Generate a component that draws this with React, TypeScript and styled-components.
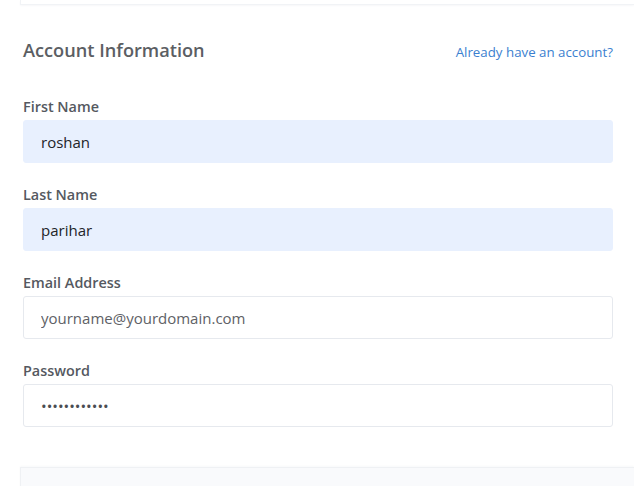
import React from "react";
import styled, { createGlobalStyle } from "styled-components";

const GlobalStyle = createGlobalStyle`
  html, body {
    margin: 0;
    padding: 0;
    background: #ffffff;
    font-family: "Open Sans", "Liberation Sans", sans-serif;
  }
`;

const Page = styled.div`
  width: 634px;
  height: 486px;
  overflow: hidden;
`;

const PrevCard = styled.div`
  margin-left: 20px;
  height: 4px;
  border: 1px solid #f1f3f6;
  border-top: none;
  border-right: none;
  background: #ffffff;
  box-shadow: 0 1px 2px rgba(40, 60, 90, 0.04);
`;

const Form = styled.form`
  padding: 33px 21px 40px 23px;
`;

const Header = styled.div`
  display: flex;
  justify-content: space-between;
  align-items: baseline;
  height: 24px;
  margin-bottom: 35px;
`;

const Title = styled.h2`
  margin: 0;
  font-size: 18.2px;
  line-height: 24px;
  font-weight: 600;
  color: #5b5e63;
`;

const SignInLink = styled.a`
  font-size: 13.3px;
  color: #3b7fd0;
  text-decoration: none;
  cursor: pointer;
`;

const Field = styled.div`
  margin-bottom: 22px;

  &:last-child {
    margin-bottom: 0;
  }
`;

const Label = styled.label`
  display: block;
  height: 20px;
  font-size: 14.4px;
  line-height: 20px;
  font-weight: 600;
  color: #55595f;
  margin-bottom: 3px;
`;

const Input = styled.input<{ $filled?: boolean }>`
  display: block;
  box-sizing: border-box;
  width: 100%;
  height: 43px;
  padding: 0 17px;
  border-radius: 3px;
  border: 1px solid ${(p) => (p.$filled ? "#e8f0fe" : "#e6e9ee")};
  background: ${(p) => (p.$filled ? "#e8f0fe" : "#ffffff")};
  font-family: "Open Sans", "Liberation Sans", sans-serif;
  font-size: 15px;
  color: #222428;
  outline: none;

  &::placeholder {
    color: #5e6166;
    opacity: 1;
  }

  &[type="password"] {
    color: #4a4d52;
  }
`;

const NextCard = styled.div`
  margin-left: 20px;
  height: 40px;
  background: #f9fafc;
  border-top: 1px solid #eff1f4;
  border-left: 1px solid #eff1f4;
  box-shadow: 0 -1px 2px rgba(40, 60, 90, 0.03);
`;

export default function App() {
  return (
    <Page>
      <GlobalStyle />
      <PrevCard />
      <Form onSubmit={(e) => e.preventDefault()}>
        <Header>
          <Title>Account Information</Title>
          <SignInLink href="#">Already have an account?</SignInLink>
        </Header>
        <Field>
          <Label htmlFor="first">First Name</Label>
          <Input id="first" $filled defaultValue="roshan" />
        </Field>
        <Field>
          <Label htmlFor="last">Last Name</Label>
          <Input id="last" $filled defaultValue="parihar" />
        </Field>
        <Field>
          <Label htmlFor="email">Email Address</Label>
          <Input id="email" type="email" placeholder="yourname@yourdomain.com" />
        </Field>
        <Field>
          <Label htmlFor="password">Password</Label>
          <Input id="password" type="password" defaultValue="secretpass12" />
        </Field>
      </Form>
      <NextCard />
    </Page>
  );
}
